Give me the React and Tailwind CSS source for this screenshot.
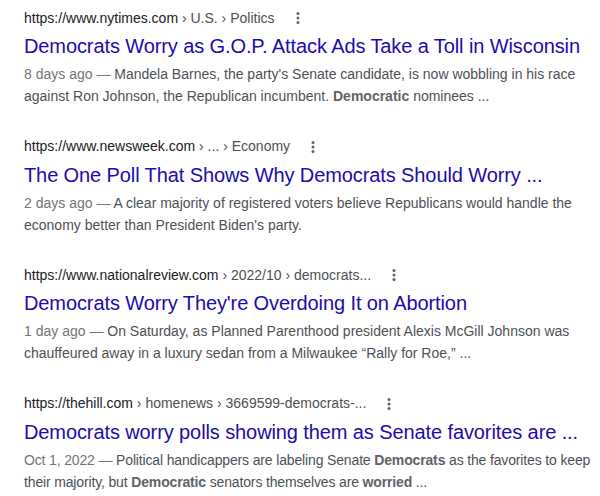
import React from 'react';

const results = [
  {
    url: 'https://www.nytimes.com',
    crumbs: ' › U.S. › Politics',
    title: 'Democrats Worry as G.O.P. Attack Ads Take a Toll in Wisconsin',
    date: '8 days ago',
    lines: [
      [{ t: 'Mandela Barnes, the party\'s Senate candidate, is now wobbling in his race' }],
      [{ t: 'against Ron Johnson, the Republican incumbent. ' }, { t: 'Democratic', b: true }, { t: ' nominees ...' }],
    ],
  },
  {
    url: 'https://www.newsweek.com',
    crumbs: ' › ... › Economy',
    title: 'The One Poll That Shows Why Democrats Should Worry ...',
    date: '2 days ago',
    lines: [
      [{ t: 'A clear majority of registered voters believe Republicans would handle the' }],
      [{ t: 'economy better than President Biden\'s party.' }],
    ],
  },
  {
    url: 'https://www.nationalreview.com',
    crumbs: ' › 2022/10 › democrats...',
    title: 'Democrats Worry They\'re Overdoing It on Abortion',
    date: '1 day ago',
    lines: [
      [{ t: 'On Saturday, as Planned Parenthood president Alexis McGill Johnson was' }],
      [{ t: 'chauffeured away in a luxury sedan from a Milwaukee \u201cRally for Roe,\u201d ...' }],
    ],
  },
  {
    url: 'https://thehill.com',
    crumbs: ' › homenews › 3669599-democrats-...',
    title: 'Democrats worry polls showing them as Senate favorites are ...',
    date: 'Oct 1, 2022',
    tight: true,
    lines: [
      [{ t: 'Political handicappers are labeling Senate ' }, { t: 'Democrats', b: true }, { t: ' as the favorites to keep' }],
      [{ t: 'their majority, but ' }, { t: 'Democratic', b: true }, { t: ' senators themselves are ' }, { t: 'worried', b: true }, { t: ' ...' }],
    ],
  },
];

const Dots = () => (
  <svg width="4" height="14" viewBox="0 0 4 14" className="ml-[21px] shrink-0">
    <circle cx="2" cy="2.5" r="1.5" fill="#5f6368" />
    <circle cx="2" cy="7" r="1.5" fill="#5f6368" />
    <circle cx="2" cy="11.5" r="1.5" fill="#5f6368" />
  </svg>
);

export default function App() {
  return (
    <div className="w-[600px] h-[496px] bg-white overflow-hidden pl-6 pt-2 font-['Liberation_Sans',Arial,sans-serif]">
      {results.map((r, i) => (
        <div key={i} className="mb-[29.6px]">
          {/* url row */}
          <div className="flex items-center h-5 text-[14px] whitespace-pre">
            <span>
              <span className="text-[#202124]">{r.url}</span>
              <span className="text-[#4d5156]">{r.crumbs}</span>
            </span>
            <Dots />
          </div>
          {/* title */}
          <div className="mt-[5px] text-[20px] leading-[26px] tracking-[-0.1px] text-[#1a0dab] whitespace-nowrap">
            {r.title}
          </div>
          {/* snippet */}
          <div
            className={
              r.tight
                ? 'mt-1 text-[14px] leading-[22px] tracking-[-0.15px] text-[#4d5156] whitespace-nowrap'
                : 'mt-1 text-[14px] leading-[22px] text-[#4d5156] whitespace-nowrap'
            }
          >
            {r.lines.map((line, j) => (
              <div key={j}>
                {j === 0 && <span className="text-[#70757a]">{r.date} — </span>}
                {line.map((s, k) =>
                  s.b ? (
                    <b key={k} className="font-bold text-[#5f6368]">{s.t}</b>
                  ) : (
                    <span key={k}>{s.t}</span>
                  )
                )}
              </div>
            ))}
          </div>
        </div>
      ))}
    </div>
  );
}
